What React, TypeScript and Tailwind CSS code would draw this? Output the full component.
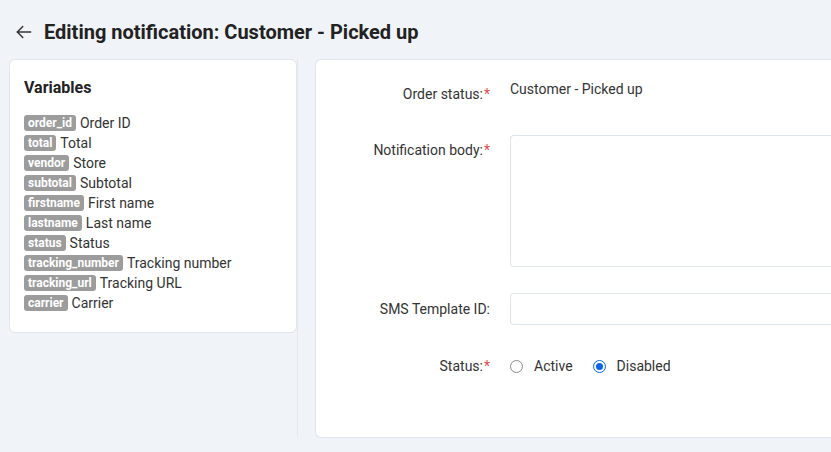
import React, { useState } from 'react';

type Variable = { key: string; label: string };

const VARIABLES: Variable[] = [
  { key: 'order_id', label: 'Order ID' },
  { key: 'total', label: 'Total' },
  { key: 'vendor', label: 'Store' },
  { key: 'subtotal', label: 'Subtotal' },
  { key: 'firstname', label: 'First name' },
  { key: 'lastname', label: 'Last name' },
  { key: 'status', label: 'Status' },
  { key: 'tracking_number', label: 'Tracking number' },
  { key: 'tracking_url', label: 'Tracking URL' },
  { key: 'carrier', label: 'Carrier' },
];

const Required = () => <span className="text-[#e5484d] ml-[1px]">*</span>;

const Radio: React.FC<{ checked: boolean; label: string; onClick: () => void }> = ({ checked, label, onClick }) => (
  <label className="flex items-center gap-[11px] cursor-pointer" onClick={onClick}>
    <span
      className={
        checked
          ? 'w-[13px] h-[13px] rounded-full border-[1.5px] border-[#0b66e4] flex items-center justify-center bg-white'
          : 'w-[13px] h-[13px] rounded-full border border-[#8a8a8a] bg-white'
      }
    >
      {checked && <span className="w-[7px] h-[7px] rounded-full bg-[#0b66e4]" />}
    </span>
    <span>{label}</span>
  </label>
);

const App: React.FC = () => {
  const [active, setActive] = useState(false);

  return (
    <div
      className="min-h-screen bg-[#f0f3f8] text-[#333] text-[14px]"
      style={{ fontFamily: 'Roboto, "Liberation Sans", sans-serif' }}
    >
      {/* Page header */}
      <header className="flex items-center h-[59px] pl-[14px] pt-[5px]">
        <svg width="20" height="20" viewBox="0 0 24 24" fill="none" stroke="#333" strokeWidth="1.8" strokeLinecap="round" strokeLinejoin="round">
          <path d="M20 12H4" />
          <path d="M10.5 5.5L4 12l6.5 6.5" />
        </svg>
        <h1 className="ml-[10px] text-[20px] font-bold text-[#222]">
          Editing notification: Customer - Picked up
        </h1>
      </header>

      <div className="flex">
        {/* Variables column */}
        <aside className="w-[298px] shrink-0 pl-[9px] pr-[1px] border-r border-[#e4e8ef] h-[378px]">
          <div className="w-[288px] bg-white border border-[#dfe5ee] rounded-[6px] pt-[16px] pb-[19px] px-[14px]">
            <h2 className="text-[16px] font-bold text-[#222] leading-[24px]">Variables</h2>
            <ul className="mt-[13px]">
              {VARIABLES.map(v => (
                <li key={v.key} className="flex items-center h-[20px] leading-[20px]">
                  <span className="bg-[#9c9c9c] text-white text-[12px] font-bold leading-[16px] px-[4px] rounded-[3px]">
                    {v.key}
                  </span>
                  <span className="ml-[4px]">{v.label}</span>
                </li>
              ))}
            </ul>
          </div>
        </aside>

        {/* Edit form */}
        <main className="flex-1 pl-[17px]">
          <div className="bg-white border border-[#dfe5ee] border-r-0 rounded-l-[6px] h-[379px] pt-[19px]">
            <div className="flex">
              <div className="w-[174px] text-right pt-[5px] leading-[20px]">
                Order status:<Required />
              </div>
              <div className="ml-[20px] leading-[20px]">Customer - Picked up</div>
            </div>

            <div className="flex mt-[31px]">
              <div className="w-[174px] text-right pt-[5px] leading-[20px]">
                Notification body:<Required />
              </div>
              <textarea className="ml-[20px] flex-1 h-[132px] border border-[#dfe5ee] border-r-0 rounded-l-[4px] resize-none outline-none" />
            </div>

            <div className="flex items-center mt-[26px]">
              <div className="w-[174px] text-right leading-[20px]">SMS Template ID:</div>
              <input className="ml-[20px] flex-1 h-[32px] border border-[#dfe5ee] border-r-0 rounded-l-[4px] outline-none" />
            </div>

            <div className="flex items-center mt-[31px]">
              <div className="w-[174px] text-right leading-[20px]">
                Status:<Required />
              </div>
              <div className="ml-[20px] flex items-center gap-[20px] leading-[20px]">
                <Radio checked={active} label="Active" onClick={() => setActive(true)} />
                <Radio checked={!active} label="Disabled" onClick={() => setActive(false)} />
              </div>
            </div>
          </div>
        </main>
      </div>
    </div>
  );
};

export default App;
